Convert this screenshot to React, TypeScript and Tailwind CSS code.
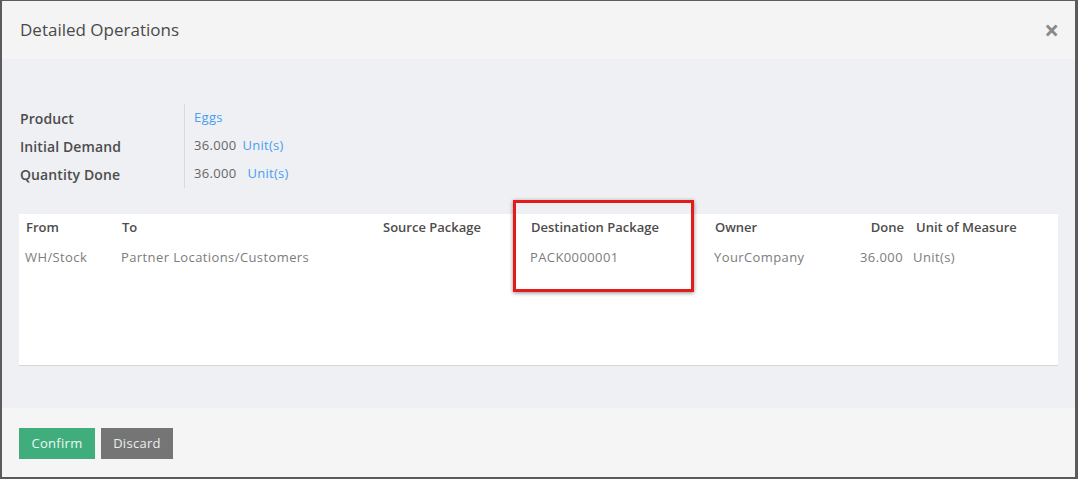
import React from "react";

const font = { fontFamily: '"Open Sans", "Liberation Sans", sans-serif' };

const InfoRow = ({label, children}: {label: string; children: React.ReactNode}) => (
    <div className="flex h-[28px] items-center">
        <div className="w-[164px] text-[14px] font-semibold tracking-[0.1px] text-[#4c4c4c]">{label}</div>
        <div className="flex h-full items-center border-l border-[#d9d9d9] pl-[9px] text-[13px] tracking-[0.3px] text-[#666]">
            {children}
        </div>
    </div>
);

const App = () => {
    return (
        <div style={font} className="h-[479px] w-full bg-[#5b5b5b] pt-[1px] pb-[2px] pl-[2px] pr-[3px]">
            <div className="flex h-full flex-col">

                {/* header */}
                <div className="flex h-[58px] items-center justify-between bg-[#f4f4f4] pl-[18px] pr-[16px]">
                    <span className="text-[17px] font-medium text-[#4a4a4a]">Detailed Operations</span>
                    <span className="text-[26px] font-bold leading-none text-[#8a8a8a]">×</span>
                </div>

                {/* body */}
                <div className="flex flex-1 flex-col bg-[#eff0f4] px-[17px] pt-[45px]">
                    <div className="pl-[1px]">
                        <InfoRow label="Product">
                            <span className="text-[#4a9df0]">Eggs</span>
                        </InfoRow>
                        <InfoRow label="Initial Demand">
                            <span>36.000</span>
                            <span className="ml-[6px] text-[#4a9df0]">Unit(s)</span>
                        </InfoRow>
                        <InfoRow label="Quantity Done">
                            <span>36.000</span>
                            <span className="ml-[11px] text-[#4a9df0]">Unit(s)</span>
                        </InfoRow>
                    </div>

                    <div className="relative mt-[26px] h-[152px] border-b border-[#d6d6d6] bg-white pl-[7px] text-[13px]">
                        <div className="flex h-[28px] items-center font-semibold text-[#4c4c4c]">
                            <div className="w-[96px]">From</div>
                            <div className="w-[261px]">To</div>
                            <div className="w-[148px]">Source Package</div>
                            <div className="w-[184px]">Destination Package</div>
                            <div className="w-[115px]">Owner</div>
                            <div className="w-[74px] text-right">Done</div>
                            <div className="ml-[12px]">Unit of Measure</div>
                        </div>
                        <div className="flex h-[32px] items-center tracking-[0.4px] text-[#7c7c7c]">
                            <div className="w-[96px] -ml-[1px]">WH/Stock</div>
                            <div className="w-[261px]">Partner Locations/Customers</div>
                            <div className="w-[148px]"></div>
                            <div className="w-[184px]">PACK0000001</div>
                            <div className="w-[115px]">YourCompany</div>
                            <div className="w-[74px] text-right">36.000</div>
                            <div className="ml-[10px]">Unit(s)</div>
                        </div>

                        {/* highlight annotation */}
                        <div className="absolute left-[494px] top-[-14px] h-[92px] w-[181px] border-[3px] border-[#e31b1b] shadow-[0_1px_4px_rgba(0,0,0,0.45)]"></div>
                    </div>
                </div>

                {/* footer */}
                <div className="flex h-[69px] items-start gap-[6px] bg-[#f5f5f5] pl-[17px] pt-[20px]">
                    <button className="h-[31px] w-[76px] bg-[#40ae7c] text-[13px] tracking-[0.3px] text-[#eef8f2]">Confirm</button>
                    <button className="h-[31px] w-[72px] bg-[#757575] text-[13px] tracking-[0.3px] text-[#eeeeee]">Discard</button>
                </div>
            </div>
        </div>
    );
};

export default App;
